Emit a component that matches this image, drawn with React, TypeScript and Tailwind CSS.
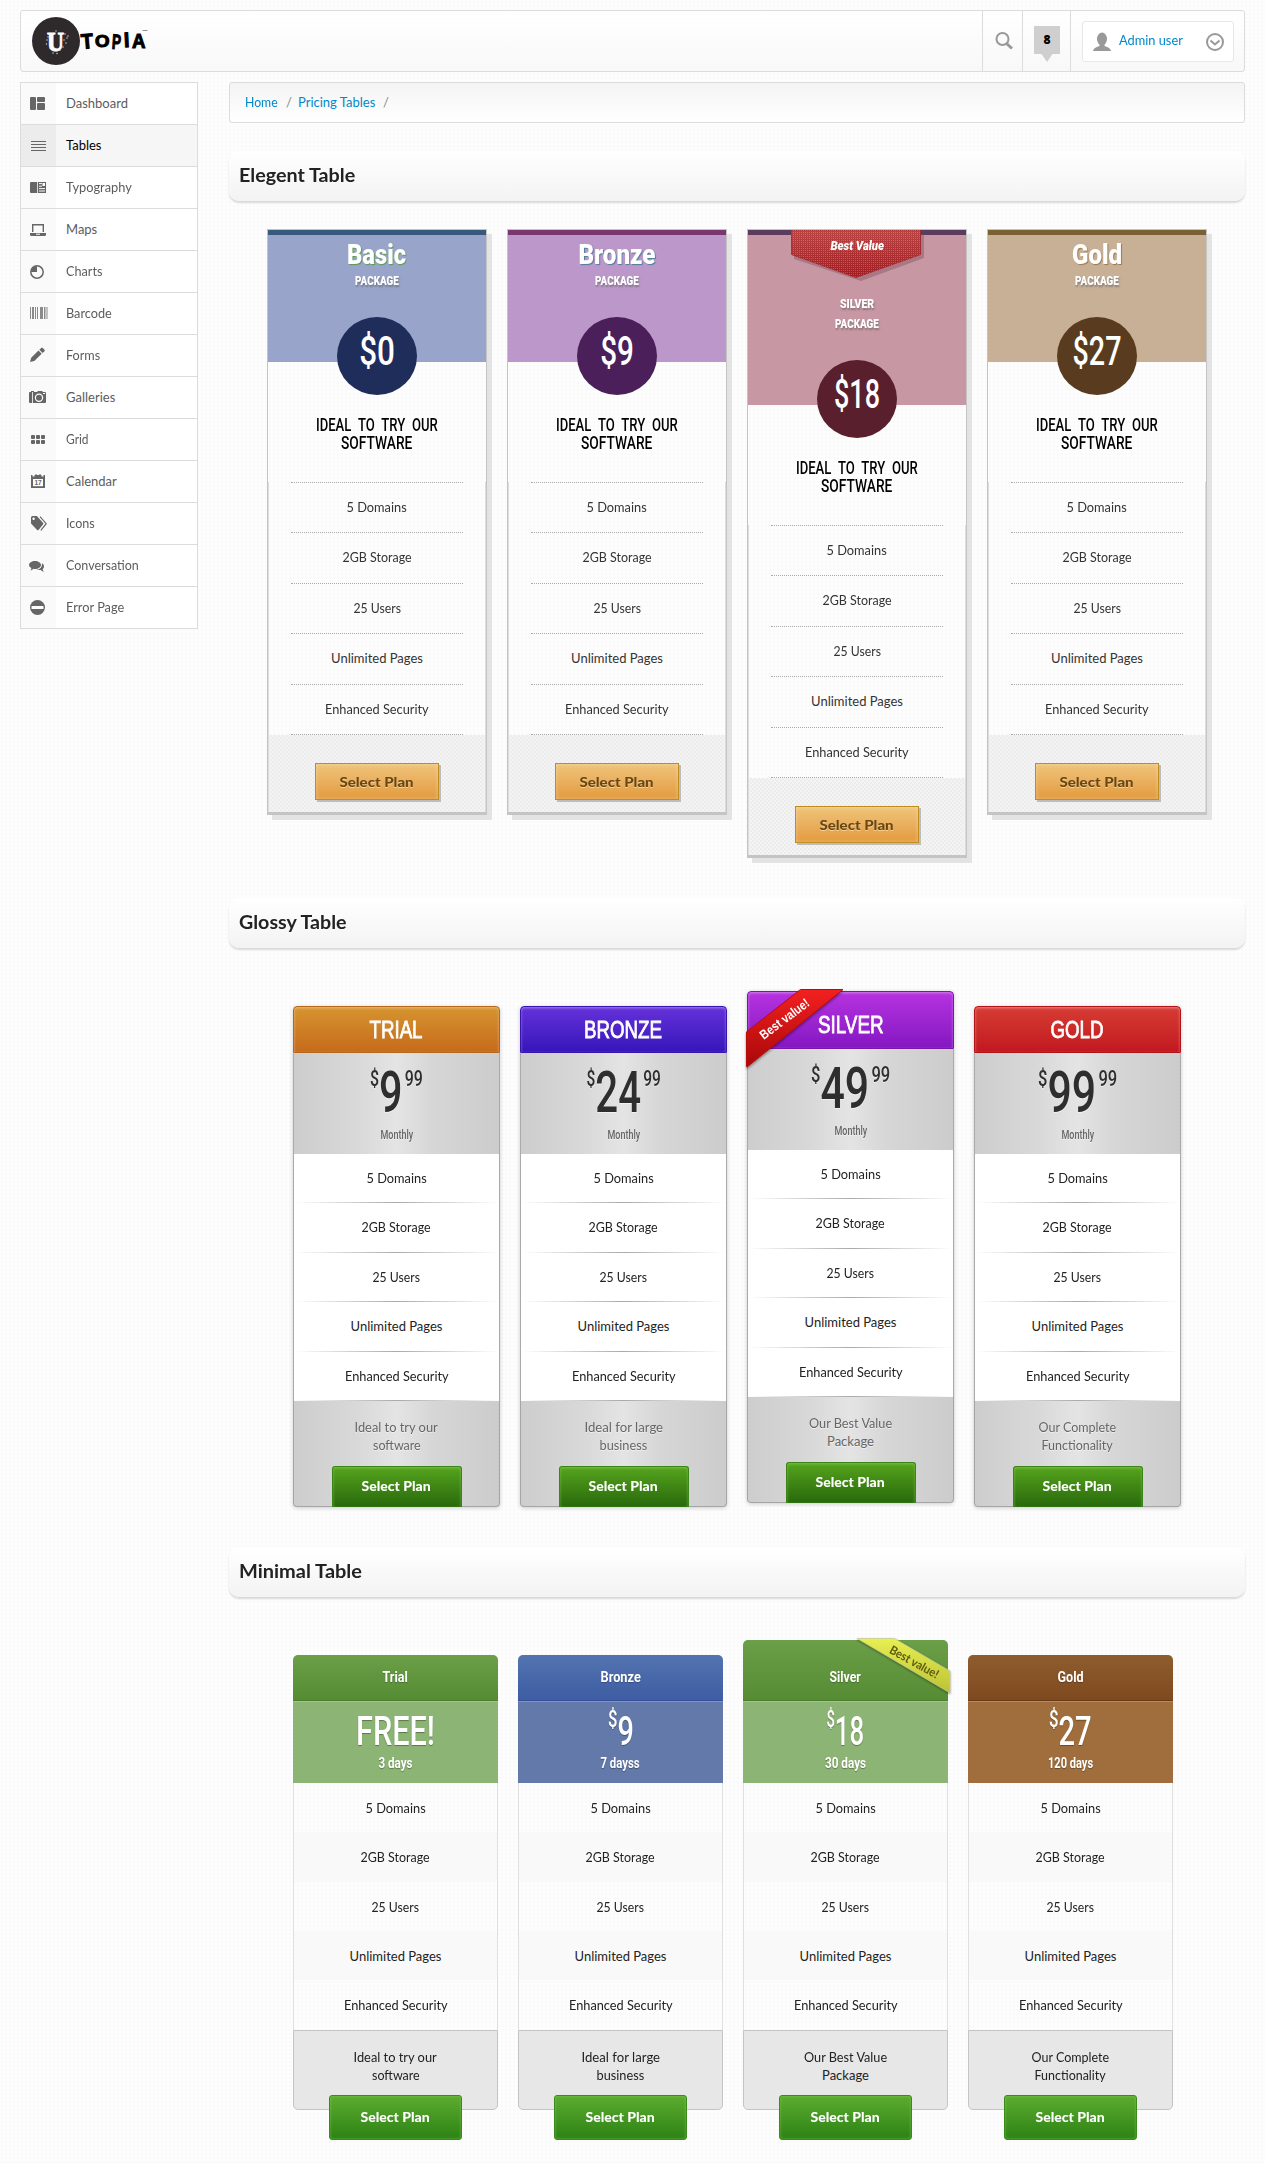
import { useLayoutEffect, useRef, useState, type ReactNode } from "react";

/* Text condensed or widened horizontally to a set width. */
function Fit({ w, className = "", children }: { w: number; className?: string; children: ReactNode }) {
  const ref = useRef<HTMLSpanElement>(null);
  const [k, setK] = useState(1);
  useLayoutEffect(() => {
    if (ref.current) setK(w / ref.current.offsetWidth);
  }, [w]);
  return (
    <span ref={ref} className={"inline-block whitespace-nowrap " + className} style={{ transform: `scaleX(${k})` }}>
      {children}
    </span>
  );
}

const features: [string, number][] = [
  ["5 Domains", 60],
  ["2GB Storage", 69],
  ["25 Users", 47],
  ["Unlimited Pages", 92],
  ["Enhanced Security", 104],
];

const icons: Record<string, ReactNode> = {
  Dashboard: (
    <g>
      <rect x="2" y="4" width="6" height="13" rx="1" />
      <rect x="9" y="4" width="8" height="5" rx="1" />
      <rect x="9" y="10" width="8" height="7" rx="1" />
    </g>
  ),
  Tables: <path d="M3 6h15v1H3zM3 9h15v1H3zM3 12h15v1H3zM3 15h15v1H3z" />,
  Typography: (
    <g>
      <path d="M3 5h6v11H3a1 1 0 0 1-1-1V6a1 1 0 0 1 1-1zM9.8 5H18v11H9.8z" />
      <path d="M11 6.6h3M11 9.2h3M11 11.6h6M11 14h6" stroke="#fff" strokeWidth="1" />
      <rect x="14.5" y="6" width="2.5" height="3" fill="#fff" />
    </g>
  ),
  Maps: (
    <g>
      <path d="M4.7 13V5.7h10.6V13" fill="none" stroke="#666" strokeWidth="1.4" />
      <path d="M2 14h16v1.5a1.5 1.5 0 0 1-1.500 1.500h-13A1.500 1.500 0 0 1 2 15.500z" />
      <rect x="8" y="14.700" width="4" height="1" fill="#fff" />
    </g>
  ),
  Charts: (
    <g>
      <circle cx="9" cy="11" r="6.200" fill="none" stroke="#666" strokeWidth="1.500" />
      <path d="M9 11V5a6 6 0 0 0-6 6z" />
    </g>
  ),
  Barcode: (
    <path
      opacity=".75"
      d="M2 4h1v12H2zM4 4h2v12H4zM7 4h1v12H7zM9 4h1v12H9zM12 4h3v12h-3zM16 4h1.500v12H16zM18.500 4h1v12h-1z"
    />
  ),
  Forms: <path d="M2 17l1.200-4.200L10.500 5.500l3.200 3.200-7.400 7.200zM11.300 4.700l1.900-1.800q.7-.7 1.500 0l1.800 1.800q.7.8 0 1.500L14.600 8z" />,
  Galleries: (
    <g>
      <path d="M2 5h1V4h3v1h3l1-1h4l1 1h2q1 0 1 1v9q0 1-1 1H2q-1 0-1-1V6q0-1 1-1z" />
      <circle cx="11" cy="10.800" r="3.600" fill="none" stroke="#fff" strokeWidth="1.200" />
      <path d="M4.500 5v11" stroke="#fff" strokeWidth=".8" />
      <rect x="15" y="6" width="2" height="1" fill="#fff" />
    </g>
  ),
  Grid: (
    <g>
      {[3, 8, 13].map((x) => (
        <g key={x}>
          <rect x={x} y="6" width="4" height="4" rx="1" />
          <rect x={x} y="11" width="4" height="4" rx="1" />
        </g>
      ))}
    </g>
  ),
  Calendar: (
    <g>
      <path d="M3 4h1.500v1.500h2V4h1V3h1v1h3V3h1v1h1v1.500h2V4H17v13H3z" />
      <rect x="5" y="8" width="10" height="7.200" fill="#fff" />
      <text x="10" y="14.200" textAnchor="middle" className="font-['Liberation_Sans'] text-[6.500px] font-bold">
        17
      </text>
    </g>
  ),
  Icons: (
    <g>
      <path d="M3 4.500Q3 3 4.500 3h4.300l6.400 7q.5.700 0 1.300L10.500 17q-.700.700-1.400 0L3 10.500z" />
      <path d="M10.800 3.500l6.500 7.200-5.500 6.800" fill="none" stroke="#fff" strokeWidth=".8" />
      <path d="M12 3.700l6.200 7-5.400 6.600" fill="none" stroke="#666" strokeWidth="1.200" />
      <circle cx="5.600" cy="5.700" r="1.200" fill="#fff" />
    </g>
  ),
  Conversation: (
    <g>
      <path d="M7 6c3.300 0 6 1.800 6 4s-2.700 4-6 4q-.8 0-1.500-.2Q4 15.500 2.300 15.500q1.200-1 1-2.500Q1 12 1 10c0-2.200 2.700-4 6-4z" />
      <path d="M14 8.200q2 1 2 3.200 0 1.800-1.300 2.800 0 1.500 1.300 2.300-2 0-3.200-1.500-2.300.3-4-.7 5.500-.2 5.200-6.100z" />
    </g>
  ),
  "Error Page": (
    <g>
      <circle cx="9.500" cy="10.500" r="7.500" />
      <rect x="3.500" y="9" width="12" height="3" rx=".5" fill="#fff" />
    </g>
  ),
};

const menu: [string, number][] = [
  ["Dashboard", 62],
  ["Tables", 36],
  ["Typography", 66],
  ["Maps", 31],
  ["Charts", 36],
  ["Barcode", 46],
  ["Forms", 34],
  ["Galleries", 49],
  ["Grid", 23],
  ["Calendar", 51],
  ["Icons", 29],
  ["Conversation", 73],
  ["Error Page", 58],
];

function Logo() {
  return (
    <svg width="120" height="56" viewBox="30 13 120 56" className="mt-[2px] ml-[9px]">
      <circle cx="56" cy="41" r="24" fill="#2e2a2b" />
      <text
        x="55.500"
        y="51"
        textAnchor="middle"
        textLength="17"
        lengthAdjust="spacingAndGlyphs"
        fill="#fff"
        className="font-['Liberation_Serif'] text-[28px] font-bold"
        stroke="#fff"
        strokeWidth="1"
      >
        U
      </text>
      <g fill="#ddd">
        {[
          [47, 40], [46.500, 44], [50, 48], [53, 53], [57, 53.500], [63, 47], [66, 43], [67, 38], [68, 36], [65, 34], [48, 37], [56, 31], [60, 50], [64, 40],
        ].map(([x, y]) => (
          <circle key={`${x}-${y}`} cx={x} cy={y} r=".7" />
        ))}
      </g>
      <g className="font-['Liberation_Sans'] text-[21px] font-bold" fill="#000" stroke="#000" strokeWidth="1.100">
        <text x="81" y="48.500" textLength="12" lengthAdjust="spacingAndGlyphs" transform="rotate(-5 87 41)">T</text>
        <text x="95" y="46.500" textLength="14.500" lengthAdjust="spacingAndGlyphs" className="text-[17px]">O</text>
        <text x="112" y="49" textLength="9" lengthAdjust="spacingAndGlyphs" transform="rotate(4 117 41)">P</text>
        <text x="124" y="47" textLength="5.500" lengthAdjust="spacingAndGlyphs" transform="rotate(-3 127 40)">I</text>
        <text x="132" y="48" textLength="13.500" lengthAdjust="spacingAndGlyphs">A</text>
      </g>
      <path d="M142.500 30.500h5" stroke="#777" strokeWidth=".8" />
    </svg>
  );
}

function Header() {
  return (
    <header className="flex h-[62px] rounded-[3px] border border-[#dcdcdc] bg-linear-to-b from-white to-[#f8f8f8]">
      <Logo />
      <div className="ml-auto flex">
        <div className="w-10 border-l border-[#dcdcdc] pt-[20px] pl-[11px]">
          <svg width="20" height="20" fill="none" stroke="#999" strokeWidth="2">
            <circle cx="8.500" cy="8" r="6" />
            <path d="M12.500 12.500l5.500 5" strokeWidth="3" />
          </svg>
        </div>
        <div className="w-12 border-l border-[#dcdcdc] pt-[15px] pl-[11px]">
          <div className="h-7 w-[26px] bg-[#cfcfcf] text-center font-['Open_Sans',sans-serif] text-xs leading-7 font-extrabold text-black">8</div>
          <svg width="26" height="8" fill="#cfcfcf">
            <path d="M7.500 0h11L13 8z" />
          </svg>
        </div>
        <div className="w-[174px] border-l border-[#dcdcdc] pt-[10px] pl-[11px]">
          <div className="flex h-[41px] w-[152px] items-center rounded-[3px] border border-[#e8e8e8] bg-white">
            <svg width="18" height="20" fill="#999" className="ml-[10px]">
              <ellipse cx="9" cy="7" rx="5" ry="6.500" />
              <path d="M6.500 11h5v3q6 1.500 6.500 5H0q.500-3.500 6.500-5z" />
            </svg>
            <span className="ml-2 w-[64px] pb-px text-[13px] text-[#0088cc]">
              <Fit w={64} className="origin-left">Admin user</Fit>
            </span>
            <svg width="20" height="20" fill="none" stroke="#999" strokeWidth="2" className="ml-[22px]">
              <circle cx="10" cy="10" r="8" />
              <path d="M5.500 8.500L10 12.500l4.500-4" />
            </svg>
          </div>
        </div>
      </div>
    </header>
  );
}

function Sidebar() {
  return (
    <nav className="w-[178px] border border-b-0 border-[#dcdcdc]">
      {menu.map(([name, w]) => {
        const on = name === "Tables";
        return (
          <div key={name} className={"flex h-[42px] border-b border-[#dcdcdc] " + (on ? "bg-[#f6f6f6]" : "bg-white")}>
            <div className={"w-[35px] pt-[10px] pl-[7px] " + (on ? "bg-[#ececec]" : "bg-[#fafafa]")}>
              <svg width="20" height="20" fill="#666">
                {icons[name]}
              </svg>
            </div>
            <span className={"pl-[10px] text-[13px] leading-[41px] " + (on ? "text-black" : "text-[#5c5c5c]")}>
              <Fit w={w} className="origin-left">{name}</Fit>
            </span>
          </div>
        );
      })}
    </nav>
  );
}

function Heading({ w, className, children }: { w: number; className: string; children: string }) {
  return (
    <h2
      className={
        "h-[50px] rounded-[10px] bg-linear-to-b from-white to-[#f3f3f3] pl-[10px] text-[18px] leading-[48px] font-bold text-[#222] shadow-[0_2px_2px_#d8d8d8] " +
        className
      }
    >
      <Fit w={w} className="origin-left">{children}</Fit>
    </h2>
  );
}

const elegant = [
  { name: "Basic", nw: 59, price: "$0", pw: 36, bar: "bg-[#36597c]", top: "bg-[#98a4c9]", dot: "bg-[#1f2d5a]", sh: "[text-shadow:1px_1px_1px_#5d9a4e]" },
  { name: "Bronze", nw: 77, price: "$9", pw: 34, bar: "bg-[#7a366e]", top: "bg-[#bb98c9]", dot: "bg-[#4b1f59]", sh: "[text-shadow:1px_1px_1px_#4e7f9a]" },
  { name: "Silver", nw: 0, price: "$18", pw: 46, bar: "bg-[#5c3c5d]", top: "bg-[#c798a3]", dot: "bg-[#591f2d]", sh: "" },
  { name: "Gold", nw: 50, price: "$27", pw: 49, bar: "bg-[#7a6133]", top: "bg-[#c8b097]", dot: "bg-[#593c1f]", sh: "[text-shadow:1px_1px_1px_#9a7a4e]" },
];

function ElegantCard({ p }: { p: (typeof elegant)[number] }) {
  const best = p.name === "Silver";
  const small = "block h-5 text-[13px] leading-5 font-black uppercase text-white [text-shadow:1px_2px_2px_#5558]";
  return (
    <div className="flex w-[220px] flex-col border border-b-[3px] border-[#c4c4c4] text-center shadow-[5px_5px_0_#e3e3e3]">
      <div className={"h-[5px] " + p.bar} />
      <div className={"relative flex flex-col items-center font-['Roboto',sans-serif] " + p.top + (best ? " h-[170px]" : " h-[127px]")}>
        {best ? (
          <>
            <svg width="136" height="54" className="absolute -top-[5px] left-[43px]">
              <defs>
                <linearGradient id="rib" x1="0" y1="0" x2="0" y2="1">
                  <stop offset="0" stopColor="#b44" />
                  <stop offset="1" stopColor="#a01c20" />
                </linearGradient>
                <pattern id="mesh" width="2" height="2" patternUnits="userSpaceOnUse">
                  <rect width="1" height="1" fill="#fff" opacity=".22" />
                </pattern>
              </defs>
              <path d="M3 4h130v24L70 51 3 29z" fill="#7a4a55" opacity=".4" />
              <path d="M.5 0h129v24.500L65 47.500.5 24.500z" fill="url(#rib)" stroke="#a02a30" />
              <path d="M.5 0h129v24.500L65 47.500.5 24.500z" fill="url(#mesh)" />
            </svg>
            <span className="absolute top-0 left-0 w-full text-[12px] leading-[23px] font-black italic text-white">
              <Fit w={54}>Best Value</Fit>
            </span>
            <div className="pt-[59px]">
              <span className={small}><Fit w={34}>Silver</Fit></span>
              <span className={small}><Fit w={44}>Package</Fit></span>
            </div>
          </>
        ) : (
          <div className="pt-[4px]">
            <div className={"h-[32px] text-[27px] leading-[33px] font-black text-white " + p.sh}>
              <Fit w={p.nw}>{p.name}</Fit>
            </div>
            <span className={small}><Fit w={44}>Package</Fit></span>
          </div>
        )}
        <div
          className={
            "absolute -bottom-[33px] left-[69px] h-[78px] w-20 rounded-[50%] text-[41px] leading-[69px] font-medium text-white " + p.dot
          }
        >
          <Fit w={p.pw} className="absolute left-1/2 -translate-x-1/2">{p.price}</Fit>
        </div>
      </div>
      <div className="h-[120px] pt-[54px] font-['Roboto',sans-serif] text-[18px] leading-[18px] font-medium text-black">
        <Fit w={122} className="[word-spacing:5px]">IDEAL TO TRY OUR</Fit>
        <br />
        <Fit w={71}>SOFTWARE</Fit>
      </div>
      <ul className="flex flex-col px-[23px] text-[13px] text-[#333] shadow-[inset_1px_0_#ddd,inset_-1px_0_#ddd]">
        {features.map(([f, w]) => (
          <li key={f} className="h-[50.4px] border-t border-dotted border-[#aaa] leading-[48px]">
            <Fit w={w}>{f}</Fit>
          </li>
        ))}
        <li className="border-t border-dotted border-[#aaa]" />
      </ul>
      <div className="flex h-[77px] justify-center bg-[repeating-conic-gradient(#ececec_0_25%,#f4f4f4_0_50%)] bg-[length:4px_4px] pt-[28px] shadow-[inset_1px_0_#ddd,inset_-1px_0_#ddd]">
        <button className="h-[37px] w-[124px] border border-[#c08d1e] bg-linear-to-b from-[#efc47a] to-[#e39a3c] text-[14px] leading-[35px] font-black text-[#6b4613] shadow-[2px_2px_0_#bdbdbd,inset_0_0_4px_#fff5] [text-shadow:0_1px_0_#f7d596]">
          <Fit w={74}>Select Plan</Fit>
        </button>
      </div>
    </div>
  );
}

const glossy = [
  { name: "TRIAL", nw: 53, a: "9", pw: 53, note: [["Ideal to try our", 83], ["software", 48]], bg: "border-[#b5681a] from-[#d6942f] to-[#c66a1b]" },
  { name: "BRONZE", nw: 78, a: "24", pw: 74, note: [["Ideal for large", 79], ["business", 48]], bg: "border-[#3a14ae] from-[#6530da] to-[#3614ba]" },
  { name: "SILVER", nw: 66, a: "49", pw: 79, note: [["Our Best Value", 83], ["Package", 47]], bg: "border-[#7a16ae] from-[#b732e0] to-[#8416c2]" },
  { name: "GOLD", nw: 53, a: "99", pw: 79, note: [["Our Complete", 78], ["Functionality", 71]], bg: "border-[#b01418] from-[#d63b33] to-[#c21620]" },
] as const;

const silverFade = "bg-[linear-gradient(90deg,#cdcdcd,#d8d8d8_30%,#e4e4e4_50%,#d6d6d6_68%,#cccccc)]";

function GlossyCard({ p }: { p: (typeof glossy)[number] }) {
  const best = p.name === "SILVER";
  return (
    <div className={"relative flex w-[207px] flex-col rounded-[4px] text-center shadow-[0_1px_4px_#0003] " + (best ? "" : "mt-[15px]")}>
      <div
        className={
          "rounded-t-[4px] border bg-linear-to-b font-['Liberation_Sans',sans-serif] text-[24px] text-white shadow-[inset_0_1px_3px_#fff6] " +
          p.bg +
          (best ? " h-[58px] pt-[9px] leading-[47px]" : " h-[47px] leading-[45px]")
        }
      >
        <Fit w={p.nw} className="[-webkit-text-stroke:0.8px_white]">{p.name}</Fit>
      </div>
      {best && (
        <>
          <svg width="106" height="86" className="absolute -top-[3px] -left-[2px] drop-shadow-[0_2px_1px_#0005]">
            <defs>
              <linearGradient id="red" x1="0" y1="0" x2="0" y2="1">
                <stop offset="0" stopColor="#f32020" />
                <stop offset="1" stopColor="#a80808" />
              </linearGradient>
            </defs>
            <path d="M55.500 1.500H98L2 79Q1.500 79 1.500 78V45q0-1.500 1-2z" fill="url(#red)" stroke="#b80c0c" />
          </svg>
          <span className="absolute top-[18px] left-[-2px] w-20 -rotate-[37deg] font-['Liberation_Sans',sans-serif] text-[13px] leading-5 font-bold text-white">
            <Fit w={58}>Best value!</Fit>
          </span>
        </>
      )}
      <div className={"h-[101px] border-x border-[#aaa] font-['Roboto',sans-serif] text-[#2e2e2e] [text-shadow:0_1px_0_#fff8] " + silverFade}>
        <Fit w={p.pw} className="h-[73px] pt-[3px]">
          <span className="inline-flex items-start font-medium">
            <span className="mt-[10px] text-[22px] leading-[26px]">$</span>
            <span className="text-[57px] leading-[73px]">{p.a}</span>
            <span className="mt-[10px] ml-[3px] text-[22px] leading-[26px]">99</span>
          </span>
        </Fit>
        <div className="-mt-[1px] text-[12px] leading-[20px] font-medium text-[#666]">
          <Fit w={33}>Monthly</Fit>
        </div>
      </div>
      <ul className="border-x border-[#aaa] bg-white text-[13px] text-[#222]">
        {features.map(([f, w]) => (
          <li
            key={f}
            className="h-[49.4px] bg-[linear-gradient(90deg,#fff,#aaa_50%,#fff)] bg-[length:100%_1px] bg-bottom bg-no-repeat leading-[49px]"
          >
            <Fit w={w}>{f}</Fit>
          </li>
        ))}
      </ul>
      <div className={"flex h-[106px] flex-col items-center rounded-b-[4px] border border-t-0 border-[#a5a5a5] pt-[17px] text-[13px] leading-[18px] text-[#666] [text-shadow:0_1px_0_#fff8] " + silverFade}>
        {p.note.map(([t, w]) => (
          <Fit key={t} w={w}>{t}</Fit>
        ))}
        <button className="mt-[12px] h-[41px] w-[130px] shrink-0 rounded-t-[3px] border border-b-0 border-[#3b8418] bg-linear-to-b from-[#55a41d] to-[#28690c] text-[13px] leading-[39px] font-black text-white shadow-[inset_0_1px_3px_#9d68] [text-shadow:none]">
          <Fit w={69}>Select Plan</Fit>
        </button>
      </div>
    </div>
  );
}

const minimal = [
  { name: "Trial", nw: 25, cur: "", a: "FREE!", pw: 79, d: "3 days", dw: 34, note: glossy[0].note, h: "border-[#4b7f2b] from-[#6b9f48] to-[#558c33]", b: "bg-[#8cb474]" },
  { name: "Bronze", nw: 40, cur: "$", a: "9", pw: 26, d: "7 dayss", dw: 39, note: glossy[1].note, h: "border-[#34509a] from-[#5473b0] to-[#3e5da3]", b: "bg-[#6279aa]" },
  { name: "Silver", nw: 31, cur: "$", a: "18", pw: 38, d: "30 days", dw: 41, note: glossy[2].note, h: "border-[#4b7f2b] from-[#6b9f48] to-[#558c33]", b: "bg-[#8cb474]" },
  { name: "Gold", nw: 26, cur: "$", a: "27", pw: 43, d: "120 days", dw: 45, note: glossy[3].note, h: "border-[#6a3a14] from-[#8e5d2e] to-[#7f491f]", b: "bg-[#a06e3c]" },
];

function MinimalCard({ p }: { p: (typeof minimal)[number] }) {
  const best = p.name === "Silver";
  return (
    <div className={"relative flex w-[205px] flex-col text-center " + (best ? "" : "mt-[15px]")}>
      <div
        className={
          "rounded-t-[5px] border-b bg-linear-to-b font-['Roboto',sans-serif] text-[15px] leading-[45px] font-bold text-white [text-shadow:0_1px_1px_#0004] " +
          p.h +
          (best ? " h-[61px] pt-[15px]" : " h-[46px]")
        }
      >
        <Fit w={p.nw}>{p.name}</Fit>
      </div>
      {best && (
        <>
          <svg width="96" height="60" className="absolute -top-[3px] left-[113px] drop-shadow-[0_1px_1px_#0006]">
            <defs>
              <linearGradient id="yel" x1="0" y1="0" x2="0" y2="1">
                <stop offset="0" stopColor="#e8ef50" />
                <stop offset="1" stopColor="#bcc235" />
              </linearGradient>
            </defs>
            <path d="M1 1.500h37.500L94 34v22z" fill="url(#yel)" stroke="#c9cb9a" strokeWidth=".7" />
          </svg>
          <span className="absolute top-[12px] left-[131px] w-20 rotate-[29deg] text-[12px] leading-5 font-bold text-[#5b5a12]">
            <Fit w={54}>Best value!</Fit>
          </span>
        </>
      )}
      <div className={"h-[82px] border-t border-[#fff3] font-['Roboto',sans-serif] text-white [text-shadow:0_1px_1px_#0005] " + p.b}>
        <Fit w={p.pw} className="h-[51px]">
          <span className="inline-flex items-start font-medium">
            {p.cur && <span className="mt-[5px] text-[23px] leading-[26px]">$</span>}
            <span className="text-[40px] leading-[59px]">{p.a}</span>
          </span>
        </Fit>
        <div className="text-[14px] leading-[20px] font-bold">
          <Fit w={p.dw}>{p.d}</Fit>
        </div>
      </div>
      <ul className="border-x border-[#e0e0e0] text-[13px] text-[#222]">
        {features.map(([f, w], i) => (
          <li key={f} className={"h-[49.4px] leading-[50px] " + (i % 2 ? "bg-[#f9f9f9]" : "")}>
            <Fit w={w}>{f}</Fit>
          </li>
        ))}
      </ul>
      <div className="flex h-[80px] flex-col items-center rounded-b-[5px] border border-[#c4c4c4] bg-[#e7e7e7] pt-[17px] text-[13px] leading-[18px] text-[#222]">
        {p.note.map(([t, w]) => (
          <Fit key={t} w={w}>{t}</Fit>
        ))}
        <button className="mt-[11px] h-[45px] w-[133px] shrink-0 rounded-[3px] border border-[#3a8a1c] bg-linear-to-b from-[#5bac2f] to-[#2c8214] text-[13px] leading-[43px] font-black text-white shadow-[inset_0_0_3px_#9d68]">
          <Fit w={69}>Select Plan</Fit>
        </button>
      </div>
    </div>
  );
}

export default function App() {
  return (
    <div className="h-[2164px] w-[1265px] overflow-hidden bg-[#fdfdfd] bg-[radial-gradient(#f9f9f9_0.8px,transparent_1px)] bg-[length:4px_4px] px-5 pt-[10px] font-['Lato',sans-serif]">
      <Header />
      <div className="mt-[10px] flex items-start gap-[31px]">
        <Sidebar />
        <main className="w-[1016px]">
          <div className="flex h-[41px] rounded-[3px] border border-[#dcdcdc] bg-linear-to-b from-[#f4f4f4] to-white pl-[15px] text-[13px] leading-[39px] text-[#0088cc]">
            <span className="w-[33px]"><Fit w={33} className="origin-left">Home</Fit></span>
            <span className="ml-[8px] w-[12px] text-[#888]">/</span>
            <span className="w-[77px]"><Fit w={77} className="origin-left">Pricing Tables</Fit></span>
            <span className="ml-[8px] text-[#888]">/</span>
          </div>

          <Heading w={116} className="mt-[28px]">Elegent Table</Heading>
          <div className="mt-[28px] flex items-start gap-5 pl-[38px]">
            {elegant.map((p) => (
              <ElegantCard key={p.name} p={p} />
            ))}
          </div>

          <Heading w={108} className="mt-[40px]">Glossy Table</Heading>
          <div className="mt-[43px] flex items-start gap-5 pl-[64px]">
            {glossy.map((p) => (
              <GlossyCard key={p.name} p={p} />
            ))}
          </div>

          <Heading w={123} className="mt-[40px]">Minimal Table</Heading>
          <div className="mt-[43px] flex items-start gap-5 pl-[64px]">
            {minimal.map((p) => (
              <MinimalCard key={p.name} p={p} />
            ))}
          </div>
        </main>
      </div>
    </div>
  );
}
